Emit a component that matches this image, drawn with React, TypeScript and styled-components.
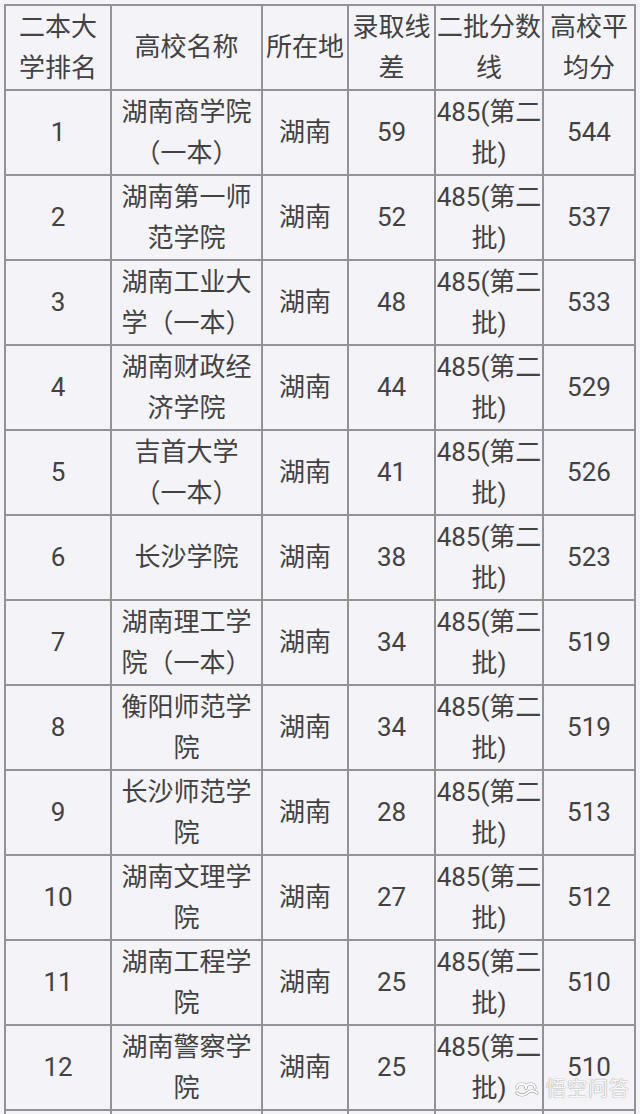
import React from "react";
import styled, { createGlobalStyle } from "styled-components";

const Global = createGlobalStyle`
  html, body { margin: 0; padding: 0; background: #f4f3f8; }
  body { font-family: Roboto, "Noto Sans CJK SC", sans-serif; color: #424242; }
`;

const Page = styled.div`
  position: relative;
  width: 640px;
  height: 1114px;
  overflow: hidden;
  padding: 4px 0 0 4px;
  box-sizing: border-box;
  background: #f4f3f8;
`;

const Table = styled.table`
  width: 630px;
  table-layout: fixed;
  border-collapse: collapse;
  font-size: 26px;
  font-weight: 400;
  line-height: 41px;
`;

const Row = styled.tr`
  height: 85px;
`;

const Cell = styled.td`
  border: 2px solid #939395;
  padding: 0;
  text-align: center;
  vertical-align: middle;
  white-space: nowrap;
  overflow: visible;
`;

const Line = styled.span`
  display: block;
`;

const Watermark = styled.div`
  position: absolute;
  right: 10px;
  bottom: 15px;
  display: flex;
  align-items: center;
  gap: 6px;
  color: rgba(255, 255, 255, 0.95);
  font-size: 20px;
  line-height: 20px;
  letter-spacing: 1px;
  text-shadow: 0 0 1px #a0a0a0, 0 0 1px #a0a0a0;
`;

const widths = [106, 151, 86, 87, 108, 92];

type RowData = {
  rank: string;
  name: string[];
  loc: string;
  diff: string;
  avg: string;
};

const header: string[][] = [
  ["二本大", "学排名"],
  ["高校名称"],
  ["所在地"],
  ["录取线", "差"],
  ["二批分数", "线"],
  ["高校平", "均分"],
];

const rows: RowData[] = [
  { rank: "1", name: ["湖南商学院", "（一本）"], loc: "湖南", diff: "59", avg: "544" },
  { rank: "2", name: ["湖南第一师", "范学院"], loc: "湖南", diff: "52", avg: "537" },
  { rank: "3", name: ["湖南工业大", "学（一本）"], loc: "湖南", diff: "48", avg: "533" },
  { rank: "4", name: ["湖南财政经", "济学院"], loc: "湖南", diff: "44", avg: "529" },
  { rank: "5", name: ["吉首大学", "（一本）"], loc: "湖南", diff: "41", avg: "526" },
  { rank: "6", name: ["长沙学院"], loc: "湖南", diff: "38", avg: "523" },
  { rank: "7", name: ["湖南理工学", "院（一本）"], loc: "湖南", diff: "34", avg: "519" },
  { rank: "8", name: ["衡阳师范学", "院"], loc: "湖南", diff: "34", avg: "519" },
  { rank: "9", name: ["长沙师范学", "院"], loc: "湖南", diff: "28", avg: "513" },
  { rank: "10", name: ["湖南文理学", "院"], loc: "湖南", diff: "27", avg: "512" },
  { rank: "11", name: ["湖南工程学", "院"], loc: "湖南", diff: "25", avg: "510" },
  { rank: "12", name: ["湖南警察学", "院"], loc: "湖南", diff: "25", avg: "510" },
];

const Lines = ({ items }: { items: string[] }) => (
  <>
    {items.map((t, i) => (
      <Line key={i}>{t}</Line>
    ))}
  </>
);

const Logo = () => (
  <svg width="26" height="18" viewBox="0 0 26 18" fill="none">
    <g stroke="#a4a4a4" strokeWidth="3.2" strokeLinecap="round">
      <path d="M3 8c0-2.5 2-4 4.5-4S12 5.5 12 8" />
      <path d="M12 8c0-2.5 2-4 4.5-4S21 5.5 21 8" />
      <path d="M3 13c3 2.5 7 2.5 10 0s7-2.5 10 0" />
    </g>
    <g stroke="#ffffff" strokeWidth="1.8" strokeLinecap="round">
      <path d="M3 8c0-2.5 2-4 4.5-4S12 5.5 12 8" />
      <path d="M12 8c0-2.5 2-4 4.5-4S21 5.5 21 8" />
      <path d="M3 13c3 2.5 7 2.5 10 0s7-2.5 10 0" />
    </g>
  </svg>
);

export default function App() {
  return (
    <>
      <Global />
      <Page>
        <Table>
          <colgroup>
            {widths.map((w, i) => (
              <col key={i} style={{ width: w }} />
            ))}
          </colgroup>
          <tbody>
            <Row>
              {header.map((h, i) => (
                <Cell key={i}>
                  <Lines items={h} />
                </Cell>
              ))}
            </Row>
            {rows.map((r) => (
              <Row key={r.rank}>
                <Cell>{r.rank}</Cell>
                <Cell>
                  <Lines items={r.name} />
                </Cell>
                <Cell>{r.loc}</Cell>
                <Cell>{r.diff}</Cell>
                <Cell>
                  <Lines items={["485(第二", "批)"]} />
                </Cell>
                <Cell>{r.avg}</Cell>
              </Row>
            ))}
            <Row>
              {widths.map((_, i) => (
                <Cell key={i} />
              ))}
            </Row>
          </tbody>
        </Table>
        <Watermark>
          <Logo />
          <span>悟空问答</span>
        </Watermark>
      </Page>
    </>
  );
}
